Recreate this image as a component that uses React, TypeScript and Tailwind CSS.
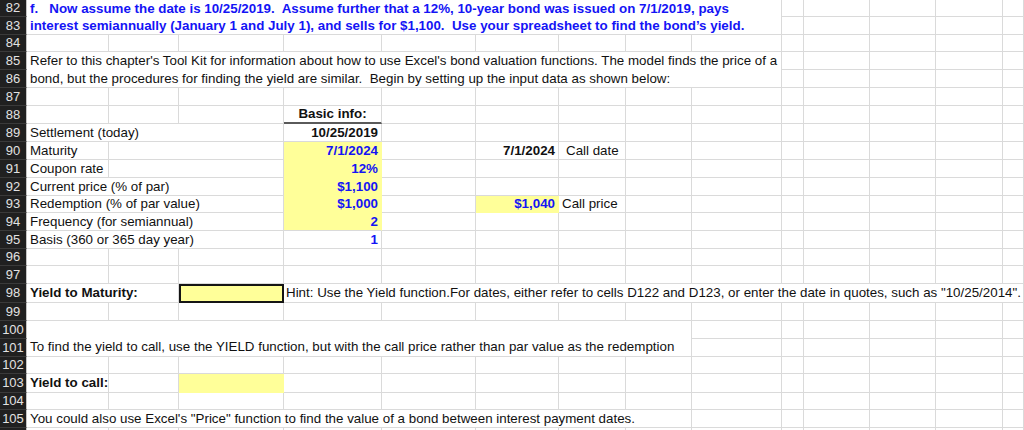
import React from 'react';

const grid = 'border-r border-b border-[#dadada]';
const yellow = 'bg-[#ffff99] border-r border-b border-[#ffff99]';
const blue = 'font-bold text-[#1414f5]';

const spans: Record<number, string> = {
  1: 'col-span-1',
  2: 'col-span-2',
  3: 'col-span-3',
  8: 'col-span-8',
  9: 'col-span-9',
  11: 'col-span-11',
};

interface CellProps {
  span?: number;
  className?: string;
  children?: React.ReactNode;
}

const Cell: React.FC<CellProps> = ({ span = 1, className = grid, children }) => (
  <div className={`${spans[span]} flex items-center overflow-hidden whitespace-pre px-[3px] ${className}`}>
    {children}
  </div>
);

const Head: React.FC<{ n?: number }> = ({ n }) => (
  <div className="flex items-center justify-center border-r border-b border-r-[#c4c4c4] border-b-[#3a3a3a] bg-[#202020] text-[13px] text-[#e2e2e2]">
    {n}
  </div>
);

const Blanks: React.FC<{ count: number }> = ({ count }) => (
  <>
    {Array.from({ length: count }).map((_, i) => (
      <Cell key={i} />
    ))}
  </>
);

export default function App() {
  return (
    <div className="h-[430px] w-[1024px] overflow-hidden bg-white font-['Liberation_Sans',Arial,sans-serif] text-[13.35px] text-[#111]">
      <div className="grid grid-cols-[27px_82px_70px_105px_98px_94px_83px_67px_66px_90px_22px_66px_66px_67px_1fr] grid-rows-[17px_18px_17px_18px_18px_18px_18px_18px_18px_18px_18px_17px_18px_18px_17px_18px_19px_18px_18px_18px_17px_19px_17px_18px_18px]">
        {/* 82-83 question */}
        <Head n={82} />
        <div className={`col-span-9 row-span-2 flex flex-col justify-center px-[3px] whitespace-pre leading-[17px] ${blue} ${grid}`}>
          <div>{'f.   Now assume the date is 10/25/2019.  Assume further that a 12%, 10-year bond was issued on 7/1/2019, pays'}</div>
          <div>{'interest semiannually (January 1 and July 1), and sells for $1,100.  Use your spreadsheet to find the bond\u2019s yield.'}</div>
        </div>
        <Blanks count={5} />
        <Head n={83} />
        <Blanks count={5} />

        {/* 84 */}
        <Head n={84} />
        <Blanks count={14} />

        {/* 85-86 instructions */}
        <Head n={85} />
        <div className={`col-span-9 row-span-2 flex flex-col justify-center px-[3px] whitespace-pre leading-[17.5px] ${grid}`}>
          <div>{"Refer to this chapter's Tool Kit for information about how to use Excel's bond valuation functions. The model finds the price of a"}</div>
          <div>{'bond, but the procedures for finding the yield are similar.  Begin by setting up the input data as shown below:'}</div>
        </div>
        <Blanks count={5} />
        <Head n={86} />
        <Blanks count={5} />

        {/* 87 */}
        <Head n={87} />
        <Blanks count={14} />

        {/* 88 */}
        <Head n={88} />
        <Blanks count={3} />
        <Cell className="justify-center border-r border-r-[#dadada] border-b-2 border-b-[#5a5a5a] font-bold">Basic info:</Cell>
        <Blanks count={10} />

        {/* 89 */}
        <Head n={89} />
        <Cell span={3}>Settlement (today)</Cell>
        <Cell className={`justify-end font-bold ${grid}`}>10/25/2019</Cell>
        <Blanks count={10} />

        {/* 90 */}
        <Head n={90} />
        <Cell>Maturity</Cell>
        <Cell span={2} />
        <Cell className={`justify-end ${blue} ${yellow}`}>7/1/2024</Cell>
        <Cell />
        <Cell className={`justify-end font-bold ${grid}`}>7/1/2024</Cell>
        <Cell className={`pl-[7px] ${grid}`}>Call date</Cell>
        <Blanks count={7} />

        {/* 91 */}
        <Head n={91} />
        <Cell>Coupon rate</Cell>
        <Cell span={2} />
        <Cell className={`justify-end ${blue} ${yellow}`}>12%</Cell>
        <Blanks count={10} />

        {/* 92 */}
        <Head n={92} />
        <Cell span={3}>Current price (% of par)</Cell>
        <Cell className={`justify-end ${blue} ${yellow}`}>$1,100</Cell>
        <Blanks count={10} />

        {/* 93 */}
        <Head n={93} />
        <Cell span={3}>Redemption (% of par value)</Cell>
        <Cell className={`justify-end ${blue} ${yellow}`}>$1,000</Cell>
        <Cell />
        <Cell className={`justify-end ${blue} ${yellow}`}>$1,040</Cell>
        <Cell>Call price</Cell>
        <Blanks count={7} />

        {/* 94 */}
        <Head n={94} />
        <Cell span={3}>Frequency (for semiannual)</Cell>
        <Cell className={`justify-end ${blue} bg-[#ffff99] border-r border-b border-r-[#ffff99] border-b-[#dadada]`}>2</Cell>
        <Blanks count={10} />

        {/* 95 */}
        <Head n={95} />
        <Cell span={3}>Basis (360 or 365 day year)</Cell>
        <Cell className={`justify-end ${blue} ${grid}`}>1</Cell>
        <Blanks count={10} />

        {/* 96-97 */}
        <Head n={96} />
        <Blanks count={14} />
        <Head n={97} />
        <Blanks count={14} />

        {/* 98 yield to maturity */}
        <Head n={98} />
        <Cell span={2} className={`font-bold ${grid}`}>Yield to Maturity:</Cell>
        <Cell className="border-2 border-[#151515] bg-[#ffff99]" />
        <Cell span={11} className={`pl-[2px] ${grid}`}>
          {'Hint: Use the Yield function.For dates, either refer to cells D122 and D123, or enter the date in quotes, such as "10/25/2014".'}
        </Cell>

        {/* 99 */}
        <Head n={99} />
        <Blanks count={14} />

        {/* 100-101 */}
        <Head n={100} />
        <div className={`col-span-8 row-span-2 flex items-end px-[3px] whitespace-pre leading-[18px] ${grid}`}>
          {'To find the yield to call, use the YIELD function, but with the call price rather than par value as the redemption'}
        </div>
        <Blanks count={6} />
        <Head n={101} />
        <Blanks count={6} />

        {/* 102 */}
        <Head n={102} />
        <Blanks count={14} />

        {/* 103 yield to call */}
        <Head n={103} />
        <Cell className={`font-bold ${grid}`}>Yield to call:</Cell>
        <Cell />
        <Cell className={yellow} />
        <Blanks count={11} />

        {/* 104 */}
        <Head n={104} />
        <Blanks count={14} />

        {/* 105 */}
        <Head n={105} />
        <Cell span={8}>
          {'You could also use Excel\'s "Price" function to find the value of a bond between interest payment dates.'}
        </Cell>
        <Blanks count={6} />

        {/* 106, only its top edge shows */}
        <Head />
        <Blanks count={14} />
      </div>
    </div>
  );
}
